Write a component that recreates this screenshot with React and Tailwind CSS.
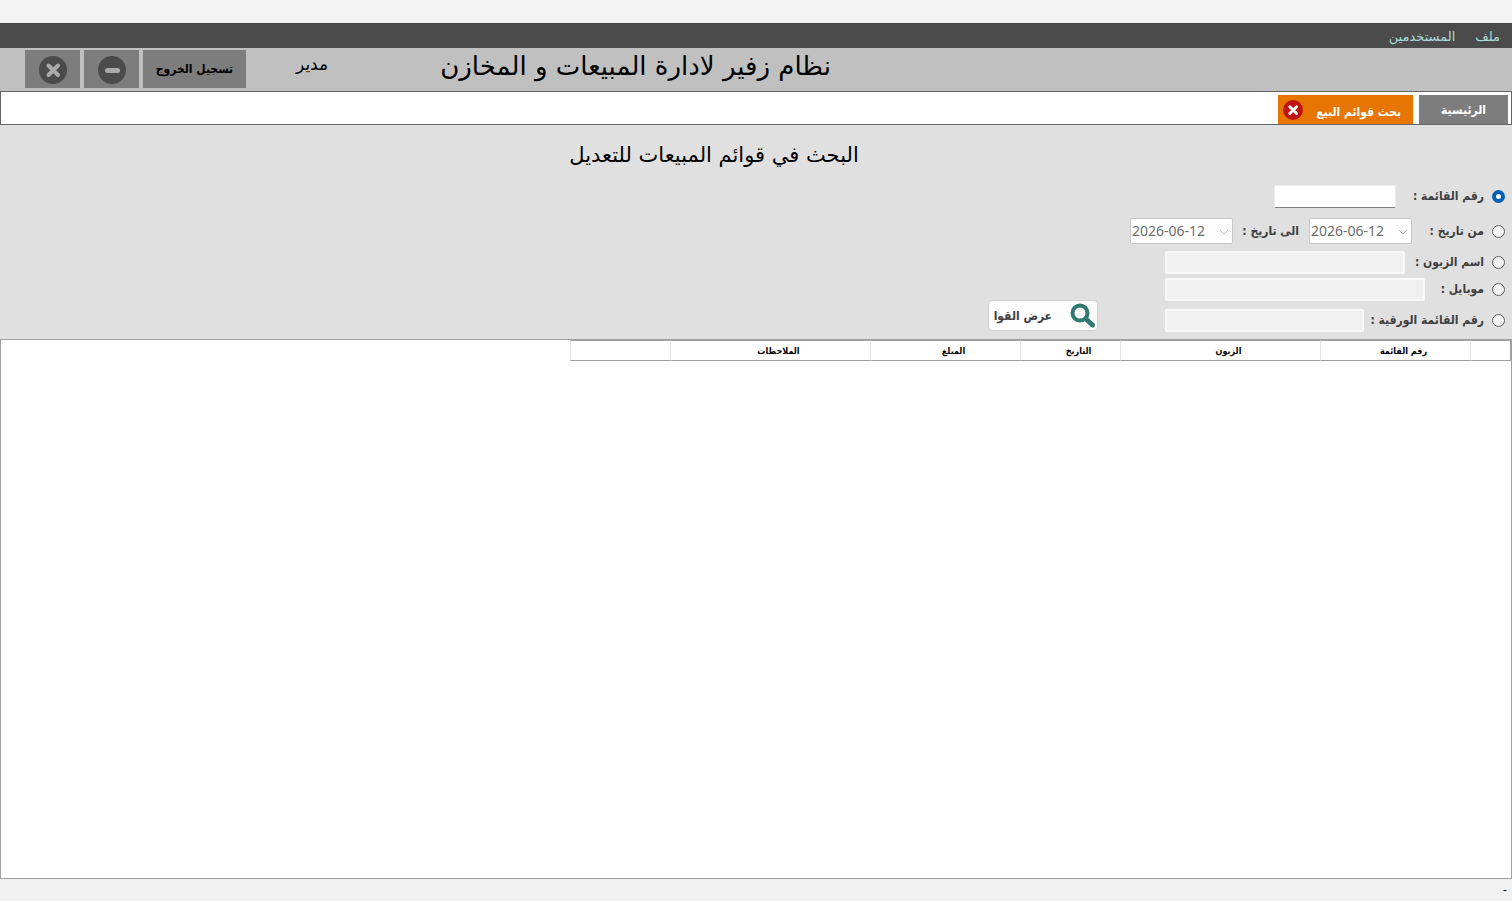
import React, { useState } from "react";

const columns = [
  { title: "", width: "w-[41px]" },
  { title: "رقم القائمة", width: "w-[150px]" },
  { title: "الزبون", width: "w-[200px]" },
  { title: "التاريخ", width: "w-[100px]" },
  { title: "المبلغ", width: "w-[150px]" },
  { title: "الملاحظات", width: "w-[200px]" },
  { title: "", width: "w-[100px]" },
];

function CloseIcon({ className, circle, cross }) {
  return (
    <svg viewBox="0 0 28 28" className={className} aria-hidden="true">
      <circle cx="14" cy="14" r="14" fill={circle} />
      <path d="M9.5 9.5l9.5 9.5M19 9.5L9.5 19" stroke={cross} strokeWidth="4" strokeLinecap="round" />
    </svg>
  );
}

function MinusIcon() {
  return (
    <svg viewBox="0 0 28 28" className="h-7 w-7" aria-hidden="true">
      <circle cx="14" cy="14" r="14" fill="#4b4b4b" />
      <path d="M9.5 14.5h10" stroke="#aaa" strokeWidth="5" strokeLinecap="round" />
    </svg>
  );
}

function SearchIcon() {
  return (
    <svg viewBox="0 0 26 26" className="h-[26px] w-[26px] shrink-0" fill="none" stroke="#327a71" aria-hidden="true">
      <circle cx="10" cy="10" r="7.5" strokeWidth="4" />
      <path d="M16 16l6.5 6" strokeWidth="5" strokeLinecap="round" />
    </svg>
  );
}

function SearchOption({ id, label, selected, onSelect, className, labelWidth, children }) {
  return (
    <div className={`flex items-center ${className}`}>
      <input
        type="radio"
        name="searchBy"
        id={id}
        checked={selected === id}
        onChange={() => onSelect(id)}
        className="h-[13px] w-[13px] shrink-0 appearance-none rounded-full border border-[#5f5f5f] bg-[#f3f3f3] checked:border-4 checked:border-[#005fb8] checked:bg-white"
      />
      <label htmlFor={id} className={`mr-2 shrink-0 pb-px text-xs leading-5 font-bold whitespace-nowrap text-[#404040] ${labelWidth}`}>
        {label}
      </label>
      {children}
    </div>
  );
}

function DateBox({ label }) {
  return (
    <div dir="ltr" className="relative shrink-0">
      <select
        aria-label={label}
        disabled
        className="block h-[26px] w-[103px] appearance-none rounded-xs border border-[#c8c8c8] bg-white pl-px font-['Noto_Sans'] text-sm leading-6 text-[#6d6d6d] opacity-100"
      >
        <option>2026-06-12</option>
      </select>
      <svg viewBox="0 0 10 6" className="pointer-events-none absolute top-[11px] right-1 h-[6px] w-[10px]" fill="none" stroke="#b0b0b0">
        <path d="M1 1l4 4 4-4" />
      </svg>
    </div>
  );
}

export default function App() {
  const [searchBy, setSearchBy] = useState("number");
  const [values, setValues] = useState({ number: "", customer: "", mobile: "", paper: "" });

  const handleChange = (e) => {
    setValues({ ...values, [e.target.name]: e.target.value });
  };

  const disabledInput = "h-[23px] rounded-xs border-2 border-[#f9f9f9] bg-[#f0f0f0] px-1 text-sm";

  return (
    <div dir="rtl" lang="ar" className="flex min-h-screen flex-col bg-[#f3f3f3] font-['DejaVu_Sans_Condensed','DejaVu_Sans',sans-serif] text-black">
      {/* Menu */}
      <nav className="mt-[23px] flex h-[25px] items-center gap-5 bg-[#4b4b4b] pt-0.5 pr-3 font-['DejaVu_Sans',sans-serif] text-[13px] text-[#a9dcd6]">
        <button type="button">ملف</button>
        <button type="button">المستخدمين</button>
      </nav>

      {/* Header */}
      <header className="flex h-[43px] items-start justify-end bg-[#c0c0c0] pl-[25px]">
        <h1 className="ml-[112px] pt-0.5 font-['DejaVu_Sans',sans-serif] text-[26px] leading-8 whitespace-nowrap">نظام زفير لادارة المبيعات و المخازن</h1>
        <span className="ml-[50px] pt-1 font-['DejaVu_Sans',sans-serif] text-[17px] leading-6">مدير</span>
        <div className="flex gap-1 pt-0.5 [&>button]:h-[38px] [&>button]:bg-[#7d7d7d]">
          <button type="button" className="w-[103px] text-xs font-bold">تسجيل الخروج</button>
          <button type="button" aria-label="تصغير" className="flex w-[55px] items-center justify-center pt-0.5">
            <MinusIcon />
          </button>
          <button type="button" aria-label="اغلاق" className="flex w-[55px] items-center justify-center pt-0.5">
            <CloseIcon className="h-7 w-7" circle="#4b4b4b" cross="#aaa" />
          </button>
        </div>
      </header>

      {/* Tabs */}
      <div className="flex h-[34px] gap-[6px] border border-[#646464] bg-white pt-[3px] pr-[3px] text-xs font-bold text-white">
        <button type="button" className="w-[89px] bg-[#7d7d7d]">الرئيسية</button>
        <div className="flex w-[135px] items-center justify-between bg-[#e67600] pr-3 pl-[5px]">
          <button type="button" className="pt-1 leading-5 whitespace-nowrap">بحث قوائم البيع</button>
          <button type="button" aria-label="اغلاق التبويب">
            <CloseIcon className="h-5 w-5" circle="#c01414" cross="#fff" />
          </button>
        </div>
      </div>

      {/* Search form */}
      <section className="bg-[#e0e0e0] pb-[7px]">
        <h2 className="pt-3.5 pr-[84px] pb-0.5 text-center font-['DejaVu_Sans',sans-serif] text-[21px] leading-8">البحث في قوائم المبيعات للتعديل</h2>
        <form className="flex items-end pr-[7px]" onSubmit={(e) => e.preventDefault()}>
          <div className="w-[375px] pt-3">
            <SearchOption id="number" label="رقم القائمة :" selected={searchBy} onSelect={setSearchBy} className="h-[23px]" labelWidth="w-[88px]">
              <input
                name="number"
                aria-label="رقم القائمة"
                value={values.number}
                onChange={handleChange}
                className="h-[23px] w-[122px] rounded-xs border border-[#ececec] border-b-[#808080] bg-white px-1 text-sm outline-none"
              />
            </SearchOption>
            <SearchOption id="date" label="من تاريخ :" selected={searchBy} onSelect={setSearchBy} className="mt-[10px] h-[26px]" labelWidth="w-[72px]">
              <DateBox label="من تاريخ" />
              <span className="w-[76px] shrink-0 pr-[10px] text-xs leading-5 font-bold whitespace-nowrap text-[#404040]">الى تاريخ :</span>
              <DateBox label="الى تاريخ" />
            </SearchOption>
            <SearchOption id="customer" label="اسم الزبون :" selected={searchBy} onSelect={setSearchBy} className="mt-[7px] h-[23px]" labelWidth="w-[79px]">
              <input name="customer" aria-label="اسم الزبون" disabled value={values.customer} onChange={handleChange} className={`w-[240px] ${disabledInput}`} />
            </SearchOption>
            <SearchOption id="mobile" label="موبايل :" selected={searchBy} onSelect={setSearchBy} className="mt-1 h-[23px]" labelWidth="w-[59px]">
              <input name="mobile" aria-label="موبايل" disabled value={values.mobile} onChange={handleChange} className={`w-[260px] ${disabledInput}`} />
            </SearchOption>
            <SearchOption id="paper" label="رقم القائمة الورقية :" selected={searchBy} onSelect={setSearchBy} className="mt-2 h-[23px]" labelWidth="w-[120px]">
              <input name="paper" aria-label="رقم القائمة الورقية" disabled value={values.paper} onChange={handleChange} className={`w-[199px] ${disabledInput}`} />
            </SearchOption>
          </div>
          <button
            type="submit"
            className="mr-8 mb-px flex h-[31px] w-[110px] items-center justify-between rounded border border-[#d0d0d0] bg-[#fdfdfd] pr-px pl-[5px] text-xs font-bold text-[#404040]"
          >
            <SearchIcon />
            <span className="ml-auto pr-[18px] whitespace-nowrap">عرض القوا</span>
          </button>
        </form>
      </section>

      {/* Results */}
      <main className="flex-1 border border-[#a0a0a0] bg-white">
        <table className="w-[941px] table-fixed border-separate border-spacing-0 text-[9px] leading-4 font-bold">
          <thead>
            <tr>
              {columns.map((col, i) => (
                <th key={i} scope="col" className={`h-[21px] border-y border-l border-y-[#a0a0a0] border-l-[#e5e5e5] p-0 pl-4 first:border-r first:border-r-[#a0a0a0] ${col.width}`}>
                  {col.title}
                </th>
              ))}
            </tr>
          </thead>
          <tbody></tbody>
        </table>
      </main>

      {/* Status bar */}
      <footer className="h-[22px] bg-[#f0f0f0] pr-[5px] text-xs leading-[22px]">-</footer>
    </div>
  );
}
